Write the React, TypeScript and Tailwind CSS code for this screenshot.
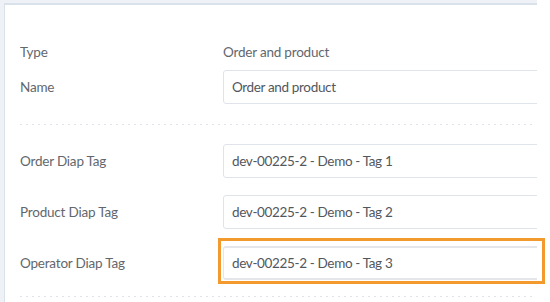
const labelCls = 'text-[13.5px] tracking-[-0.2px] text-[#62676d]';
const inputCls =
  'flex h-[34px] w-[340px] items-center rounded-[3px] border border-[#dfe4ea] bg-white px-2 text-[13.5px] tracking-[-0.35px] text-[#52575d]';

const Dots = () => (
  <div className="mr-[3px] h-px bg-[repeating-linear-gradient(to_right,#e0e3e7_0_2px,transparent_2px_6px)]" />
);

const tags = [
  { label: 'Order Diap Tag', value: 'dev-00225-2 - Demo - Tag 1', active: false },
  { label: 'Product Diap Tag', value: 'dev-00225-2 - Demo - Tag 2', active: false },
  { label: 'Operator Diap Tag', value: 'dev-00225-2 - Demo - Tag 3', active: true },
];

export default function App() {
  return (
    <div className="relative h-[302px] w-[550px] overflow-hidden bg-white font-['Lato',sans-serif]">
      <div className="h-full w-[537px] bg-[#eef2f6] pl-1 pt-[3px]">
        <div className="h-full overflow-hidden border-l border-t-2 border-[#d9e1ea] bg-white pl-[15px] pt-[37px]">
          <div className="grid grid-cols-[203px_1fr] items-center">
            <div className={`${labelCls} leading-[20px]`}>Type</div>
            <div className={`${labelCls} leading-[20px]`}>Order and product</div>
          </div>
          <div className="mt-2 grid grid-cols-[203px_1fr] items-center">
            <div className={labelCls}>Name</div>
            <div className={`${inputCls} h-[33px]`}>Order and product</div>
          </div>
          <div className="mt-5 mb-[19px]">
            <Dots />
          </div>
          <div className="flex flex-col gap-[17px]">
            {tags.map((t) => (
              <div key={t.label} className="grid grid-cols-[203px_1fr] items-center">
                <div className={labelCls}>{t.label}</div>
                <div className={`${inputCls} ${t.active ? 'border-y-2 border-[#e4e6e9]' : ''}`}>{t.value}</div>
              </div>
            ))}
          </div>
          <div className="mt-4">
            <Dots />
          </div>
        </div>
      </div>
      <div className="absolute left-[218px] top-[238px] h-[46px] w-[327px] border-[3px] border-[#f39a2e]" />
    </div>
  );
}
